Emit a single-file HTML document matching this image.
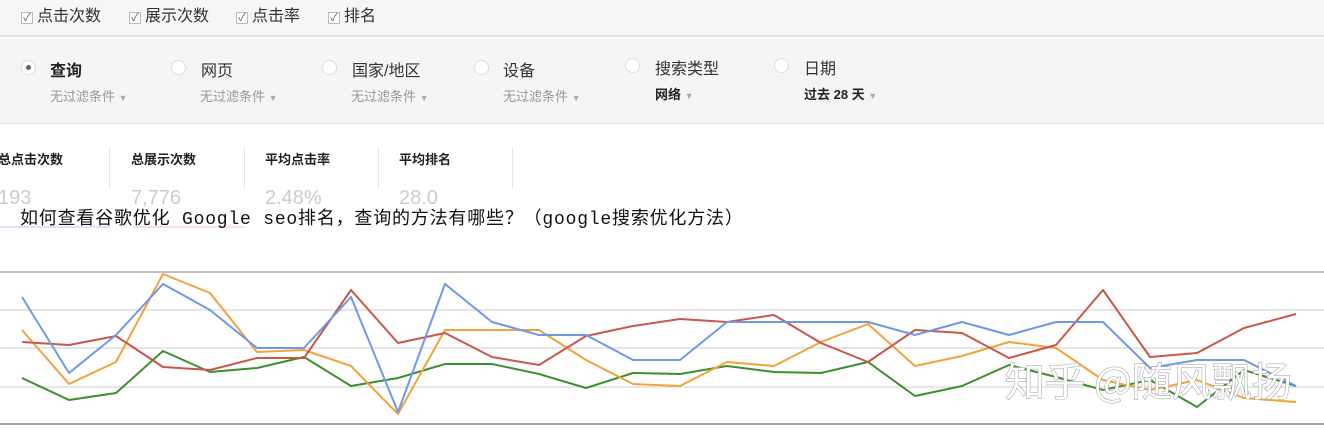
<!DOCTYPE html>
<html><head><meta charset="utf-8"><style>
*{margin:0;padding:0;box-sizing:border-box}
body{width:1324px;height:436px;overflow:hidden;background:#fff;font-family:"Liberation Sans","Noto Sans CJK SC",sans-serif;position:relative;color:#333}
.a{position:absolute;white-space:nowrap}
.top{left:0;top:0;width:1324px;height:37px;background:#f6f6f6;border-bottom:2px solid #e2e2e2}
.band{left:0;top:39px;width:1324px;height:85px;background:#f5f5f5;border-bottom:1px solid #e4e4e4}
.cb{font-size:16px;color:#333;top:6px;line-height:22px}
.cb span{display:inline-block;width:12px;height:12px;border:1px solid #bbb;background:#fff;font-size:11px;line-height:10px;text-align:center;color:#666;margin-right:4px;vertical-align:0px}
.rad{width:15px;height:15px;border-radius:50%;background:#fff;border:1px solid #ddd;top:60px}
.lab{font-size:16px;top:57px;color:#333}
.sub{font-size:13px;color:#999;top:86px}
.sub b{font-size:9px;color:#aaa;font-weight:normal}
.mh{font-size:13px;font-weight:bold;top:149px;color:#222}
.mv{font-size:20px;color:#ccc;top:187px}
.dv{top:147px;width:1px;height:42px;background:#e6e6e6}
</style></head><body>
<div class="a top"></div>
<div class="a band"></div>
<div class="a cb" style="left:21px"><span>✓</span>点击次数</div>
<div class="a cb" style="left:129px"><span>✓</span>展示次数</div>
<div class="a cb" style="left:236px"><span>✓</span>点击率</div>
<div class="a cb" style="left:328px"><span>✓</span>排名</div>

<div class="a rad" style="left:21px"><div style="width:5px;height:5px;border-radius:50%;background:#666;margin:4px 0 0 4px"></div></div>
<div class="a lab" style="left:50px;font-weight:bold;color:#222">查询</div>
<div class="a sub" style="left:50px">无过滤条件 <b>▼</b></div>
<div class="a rad" style="left:171px"></div>
<div class="a lab" style="left:201px">网页</div>
<div class="a sub" style="left:200px">无过滤条件 <b>▼</b></div>
<div class="a rad" style="left:322px"></div>
<div class="a lab" style="left:352px">国家/地区</div>
<div class="a sub" style="left:351px">无过滤条件 <b>▼</b></div>
<div class="a rad" style="left:474px"></div>
<div class="a lab" style="left:503px">设备</div>
<div class="a sub" style="left:503px">无过滤条件 <b>▼</b></div>
<div class="a rad" style="left:625px;top:58px"></div>
<div class="a lab" style="left:655px;top:55px">搜索类型</div>
<div class="a sub" style="left:655px;top:84px;color:#222;font-weight:bold">网络 <b>▼</b></div>
<div class="a rad" style="left:774px;top:58px"></div>
<div class="a lab" style="left:804px;top:55px">日期</div>
<div class="a sub" style="left:804px;top:84px;color:#222;font-weight:bold">过去 28 天 <b>▼</b></div>

<div class="a mh" style="left:-2px">总点击次数</div>
<div class="a mh" style="left:131px">总展示次数</div>
<div class="a mh" style="left:265px">平均点击率</div>
<div class="a mh" style="left:399px">平均排名</div>
<div class="a dv" style="left:109px"></div>
<div class="a dv" style="left:244px"></div>
<div class="a dv" style="left:378px"></div>
<div class="a dv" style="left:512px"></div>
<div class="a mv" style="left:-2px">193</div>
<div class="a mv" style="left:131px">7,776</div>
<div class="a mv" style="left:265px">2.48%</div>
<div class="a mv" style="left:399px">28.0</div>
<div class="a" style="left:0;top:226px;width:110px;height:2px;background:#dbe5f8"></div>
<div class="a" style="left:134px;top:226px;width:110px;height:2px;background:#f6e2d8"></div>
<div class="a" style="left:20px;top:204px;font-size:18px;color:#111;font-family:'Liberation Mono','Noto Sans CJK SC',monospace;letter-spacing:0.8px">如何查看谷歌优化 Google seo排名，查询的方法有哪些？（google搜索优化方法）</div>

<svg class="a" style="left:0;top:0" width="1324" height="436">
<g stroke-width="1.5">
<line x1="0" y1="272" x2="1324" y2="272" stroke="#aaa"/>
<line x1="0" y1="310" x2="1324" y2="310" stroke="#ddd"/>
<line x1="0" y1="348" x2="1324" y2="348" stroke="#ddd"/>
<line x1="0" y1="387" x2="1324" y2="387" stroke="#ddd"/>
<line x1="0" y1="424" x2="1324" y2="424" stroke="#888"/>
</g>
<g fill="none" stroke-width="2" stroke-linejoin="round">
<polyline stroke="#3d8f2f" points="22,378 69,400 116,393 163,351 210,372 257,368 304,357 351,386 398,378 445,364 492,364 539,374 586,388 633,373 680,374 727,366 774,372 821,373 868,362 915,396 962,386 1009,365 1056,377 1103,390 1150,380 1197,407 1244,370 1296,386"/>
<polyline stroke="#f0a43c" points="22,330 69,384 116,362 163,274 210,293 257,352 304,350 351,366 398,414 445,330 492,330 539,330 586,360 633,384 680,386 727,362 774,366 821,342 868,324 915,366 962,356 1009,342 1056,348 1103,380 1150,390 1197,380 1244,398 1296,402"/>
<polyline stroke="#c9574a" points="22,342 69,345 116,336 163,367 210,370 257,358 304,358 351,290 398,343 445,333 492,357 539,365 586,336 633,326 680,319 727,322 774,315 821,343 868,362 915,330 962,333 1009,358 1056,345 1103,290 1150,357 1197,353 1244,328 1296,314"/>
<polyline stroke="#6e98e8" points="22,297 69,373 116,335 163,284 210,310 257,348 304,348 351,297 398,412 445,284 492,322 539,335 586,335 633,360 680,360 727,322 774,322 821,322 868,322 915,335 962,322 1009,335 1056,322 1103,322 1150,368 1197,360 1244,360 1296,386"/>
</g>
<text x="1005" y="396" font-size="40" font-family="Noto Sans CJK SC,sans-serif" fill="#fff" stroke="#999" stroke-width="1" style="paint-order:stroke">知乎 @随风飘扬</text>
</svg>
</body></html>
